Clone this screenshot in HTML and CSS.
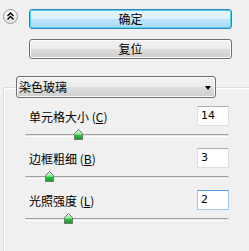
FILE: index.html
```html
<!DOCTYPE html>
<html>
    <head>
        <title>染色玻璃</title>
        <link rel="stylesheet" href="styles.css">
    </head>
    <body>
        <div class="top">
            <span class="collapse">
                <svg width="15" height="15" viewBox="0 0 15 15">
                    <path d="M4.5 7 L7.5 4 L10.5 7 M4.5 10.5 L7.5 7.5 L10.5 10.5" fill="none" stroke="#000" stroke-width="1.4"/>
                </svg>
            </span>
            <div class="actions">
                <button class="btn default">确定</button>
                <button class="btn">复位</button>
            </div>
        </div>

        <div class="group">
            <div class="combo">
                <span>染色玻璃</span>
                <b class="arrow"></b>
            </div>

            <div class="row">
                <div class="head">
                    <span class="label">单元格大小 (<u>C</u>)</span>
                    <span class="field">14</span>
                </div>
                <div class="slider">
                    <div class="track"></div>
                    <span class="thumb" style="--p: 0.25"></span>
                </div>
            </div>
            <div class="row">
                <div class="head">
                    <span class="label">边框粗细 (<u>B</u>)</span>
                    <span class="field">3</span>
                </div>
                <div class="slider">
                    <div class="track"></div>
                    <span class="thumb" style="--p: 0.105"></span>
                </div>
            </div>
            <div class="row">
                <div class="head">
                    <span class="label">光照强度 (<u>L</u>)</span>
                    <span class="field focus">2</span>
                </div>
                <div class="slider">
                    <div class="track"></div>
                    <span class="thumb" style="--p: 0.2"></span>
                </div>
            </div>
        </div>
    </body>
</html>
```

FILE: styles.css
```css
body {
    margin: 0;
    background: #f0f0f0;
    font: 12px "Noto Sans CJK SC", "Liberation Sans", sans-serif;
    color: #000;
    overflow: hidden;
}
    .top {
        display: flex;
        align-items: flex-start;
        padding: 9px 0 0 3px;
    }
    .collapse {
        display: block;
        width: 15px;
        height: 15px;
        box-sizing: border-box;
        border: 1px solid #9a9a9a;
        border-radius: 50%;
        background: linear-gradient(#ffffff, #e4e4e4);
    }
    .collapse svg {
        display: block;
        margin: -1px;
    }
    .actions {
        display: flex;
        flex-direction: column;
        gap: 10px;
        width: 203px;
        margin-left: 11px;
    }
    .btn {
        height: 20px;
        padding: 0;
        border: 1px solid #707070;
        border-radius: 3px;
        font: inherit;
        line-height: 16px;
        color: #000;
        background: linear-gradient(#f2f2f2 0%, #ebebeb 50%, #dddddd 51%, #cfcfcf 100%);
        box-shadow: inset 0 0 0 1px #fcfcfc;
    }
    .btn.default {
        border-color: #3c7fb1;
        background: linear-gradient(#eaf6fd 0%, #d9f0fc 50%, #bee6fd 51%, #a7d9f5 100%);
        box-shadow: inset 0 0 0 1px #48d4f8;
    }
    .group {
        width: 245px;
        margin: 28px 0 0 3px;
        border-top: 1px solid #d5dfe5;
        border-left: 1px solid #d5dfe5;
        box-shadow: inset 1px 1px 0 #fff;
        height: 170px;
    }
    .combo {
        display: flex;
        align-items: center;
        justify-content: space-between;
        width: 200px;
        height: 22px;
        box-sizing: border-box;
        margin: -12px 0 0 12px;
        padding: 0 4px 0 2px;
        border: 1px solid #707070;
        border-radius: 3px;
        background: linear-gradient(#f2f2f2 0%, #ebebeb 50%, #dddddd 51%, #cfcfcf 100%);
        box-shadow: inset 0 0 0 1px #fcfcfc;
        line-height: 18px;
    }
    .arrow {
        width: 0;
        height: 0;
        border-left: 3.5px solid transparent;
        border-right: 3.5px solid transparent;
        border-top: 4px solid #000;
        margin-top: 1px;
    }
    .row {
        height: 42px;
        padding: 0 20px 0 21px;
    }
    .combo + .row {
        margin-top: 8px;
    }
    .head {
        display: flex;
        align-items: center;
        justify-content: space-between;
        height: 20px;
    }
    .label {
        margin-left: 4px;
    }
    .field {
        width: 32px;
        height: 20px;
        box-sizing: border-box;
        padding: 0 3px;
        border: 1px solid #dbdfe6;
        border-top-color: #abadb3;
        background: #fff;
        line-height: 18px;
        font-family: "DejaVu Sans", sans-serif;
        font-size: 11px;
    }
    .field.focus {
        border-color: #a4c9e3;
        border-top-color: #569de5;
    }
    .slider {
        position: relative;
        height: 11px;
        margin-top: 3px;
    }
    .track {
        position: relative;
        top: 5px;
        height: 1px;
        border-top: 1px solid #a0a0a0;
        border-bottom: 1px solid #fff;
        background: #e6e6e6;
        border-radius: 2px;
    }
    .thumb {
        position: absolute;
        top: 0;
        left: calc(var(--p) * (100% - 9px));
        width: 9px;
        height: 11px;
        background: url("data:image/svg+xml,%3Csvg xmlns='http://www.w3.org/2000/svg' width='9' height='11'%3E%3ClinearGradient id='g' x1='0' y1='0' x2='0' y2='1'%3E%3Cstop offset='0' stop-color='%23f4fff4'/%3E%3Cstop offset='0.45' stop-color='%2390e890'/%3E%3Cstop offset='0.6' stop-color='%2322c23a'/%3E%3Cstop offset='1' stop-color='%23119a22'/%3E%3C/linearGradient%3E%3Cpath d='M0.5 4.5 L4.5 0.5 L8.5 4.5 V10.5 H0.5 Z' fill='url(%23g)' stroke='%23707a70'/%3E%3C/svg%3E");
    }
```
